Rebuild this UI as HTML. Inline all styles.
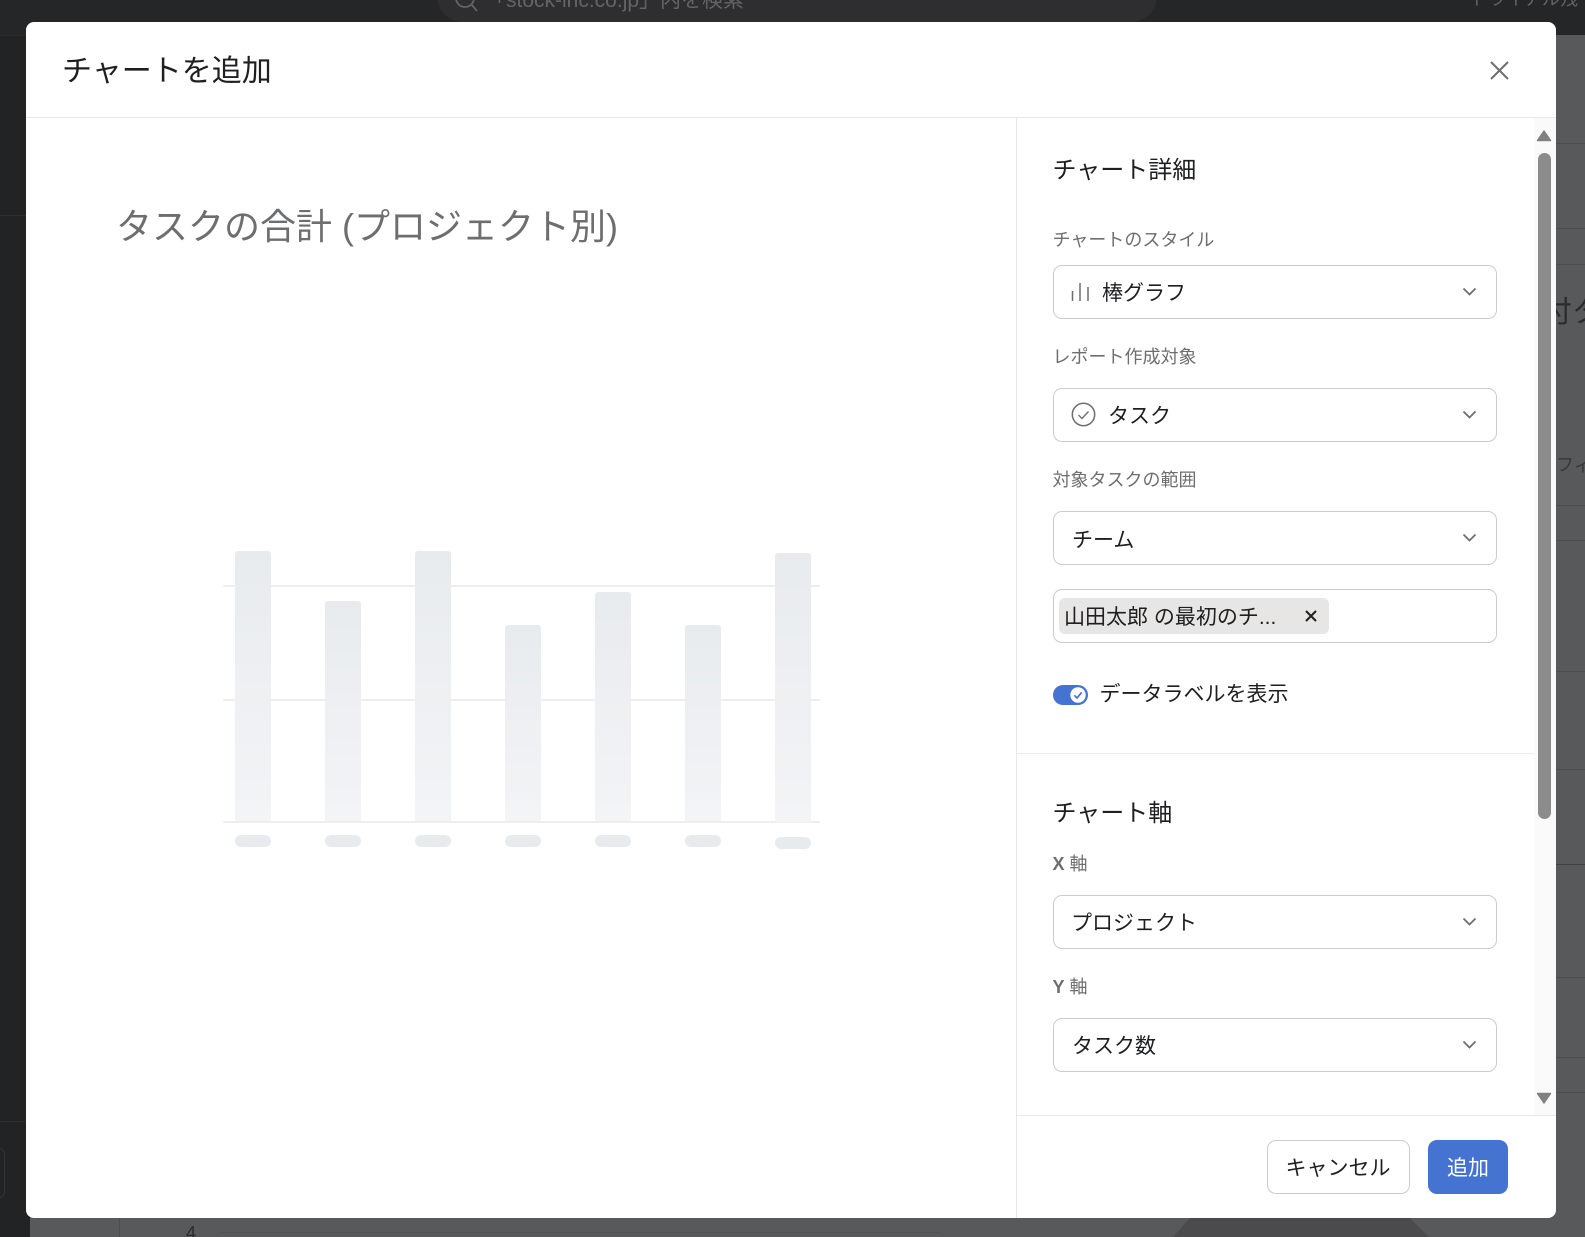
<!DOCTYPE html>
<html lang="ja"><head><meta charset="utf-8"><title>チャートを追加</title>
<style>
html,body{margin:0;padding:0;width:1585px;height:1237px;overflow:hidden;background:#58595b}
body{position:relative;font-family:"Liberation Sans","Noto Sans CJK JP",sans-serif;color:#1e1f21}
div,span{position:absolute;box-sizing:border-box;white-space:nowrap}
.t{line-height:32px;height:32px}
.lb{font-size:18px;color:#6d6e6f;left:1052.5px}
.h{font-size:24px;color:#1e1f21;left:1052.5px}
.v{font-size:21px;color:#1e1f21}
.sel{left:1053px;width:444px;height:54px;border:1.5px solid #cfcbcb;border-radius:9px;background:#fff}
.bar{width:36px;background:linear-gradient(#e8ebee,#f3f4f6);border-radius:3px 3px 0 0}
.pill{width:36px;height:12px;border-radius:6px;background:#e8ebee}
.g{left:223px;width:597px;height:2px;background:#edeef0}
.rl{left:1556px;width:29px;height:1px;background:#4d4e50}
svg{position:absolute;display:block}
</style></head><body>
<div style="left:0;top:0;width:1585px;height:35px;background:#252628"></div>
<div style="left:0;top:35px;width:30px;height:1202px;background:#222325"></div>
<div style="left:0;top:35px;width:26px;height:1px;background:#2c2d2f"></div>
<div style="left:0;top:215px;width:26px;height:1px;background:#2c2d2f"></div>
<div style="left:0;top:1121px;width:26px;height:1px;background:#2c2d2f"></div>
<div style="left:-20px;top:1148px;width:25px;height:50px;border:1px solid #333436;border-radius:6px"></div>
<div style="left:437px;top:-30px;width:720px;height:52px;border-radius:26px;background:#2e2e30"></div>
<svg style="left:452px;top:-10px" width="30" height="26" viewBox="0 0 30 26"><circle cx="13" cy="8" r="9" fill="none" stroke="#636466" stroke-width="1.8"/><path d="M19.5 14.5L25 21" stroke="#636466" stroke-width="1.8" fill="none"/></svg>
<div style="left:485px;top:-11px;font-size:21px;line-height:24px;color:#636466">「stock-inc.co.jp」内を検索</div>
<div style="left:1470px;top:-13px;font-size:18px;line-height:24px;color:#636466">トライアル残</div>
<div class="rl" style="top:143px"></div><div class="rl" style="top:228px"></div><div class="rl" style="top:264px"></div>
<div class="rl" style="top:505px"></div><div class="rl" style="top:540px"></div><div class="rl" style="top:671px"></div>
<div class="rl" style="top:769px"></div><div class="rl" style="top:864px;background:#404143"></div><div class="rl" style="top:977px"></div>
<div class="rl" style="top:1057px"></div><div class="rl" style="top:1092px"></div>
<div style="left:1556px;top:295px;width:29px;height:44px;overflow:hidden"><span style="left:-14px;top:0;font-size:30px;line-height:36px;color:#2b2c2e">付タ</span></div>
<div style="left:1556px;top:452px;font-size:18px;line-height:26px;color:#37383a;width:29px;overflow:hidden">フィ</div>
<div style="left:119px;top:1218px;width:1px;height:19px;background:#4d4e50"></div>
<div style="left:186px;top:1221px;font-size:18px;line-height:24px;color:#2b2c2e">4</div>
<div style="left:220px;top:1232px;width:720px;height:1px;background:#515254"></div>
<svg style="left:1170px;top:1218px" width="265" height="19"><path d="M20 0H240L259 19H3Z" fill="#4b4b4d"/></svg>

<div style="left:26px;top:22px;width:1530px;height:1196px;background:#fff;border-radius:8px;overflow:hidden">
 <div style="left:0;top:95px;width:1530px;height:1px;background:#e8e8e9"></div>
 <div style="left:990px;top:95px;width:1px;height:1101px;background:#e8e8e9"></div>
 <div style="left:1508px;top:96px;width:22px;height:997px;background:#fafafa"></div>
 <div style="left:1512px;top:131px;width:13px;height:666px;background:#8c8c8c;border-radius:7px"></div>
 <div style="left:991px;top:731px;width:517px;height:1px;background:#ececed"></div>
 <div style="left:991px;top:1093px;width:539px;height:1px;background:#e8e8e9"></div>
</div>
<svg style="left:1536px;top:129px" width="16" height="13"><path d="M8 2L14.5 11.5H1.5Z" fill="#808080" stroke="#808080" stroke-width="1.5" stroke-linejoin="round"/></svg>
<svg style="left:1536px;top:1092px" width="16" height="13"><path d="M1.5 1.5H14.5L8 11Z" fill="#808080" stroke="#808080" stroke-width="1.5" stroke-linejoin="round"/></svg>

<div class="t" style="left:62px;top:56px;height:32px;font-size:30px;line-height:32px;color:#1e1f21">チャートを追加</div>
<svg style="left:1489px;top:60px" width="21" height="21" viewBox="0 0 21 21"><path d="M2 2L19 19M19 2L2 19" stroke="#6d6e6f" stroke-width="2" fill="none"/></svg>

<div style="left:116px;top:204px;font-size:36px;line-height:46px;color:#6d6e6f">タスクの合計 (プロジェクト別)</div>

<div class="g" style="top:585px"></div>
<div class="g" style="top:699px"></div>
<div class="g" style="top:821px"></div>
<div class="bar" style="left:235px;top:551px;height:270px"></div>
<div class="bar" style="left:325px;top:600.5px;height:220.5px"></div>
<div class="bar" style="left:415px;top:551px;height:270px"></div>
<div class="bar" style="left:505px;top:624.5px;height:196.5px"></div>
<div class="bar" style="left:595px;top:591.5px;height:229.5px"></div>
<div class="bar" style="left:685px;top:624.5px;height:196.5px"></div>
<div class="bar" style="left:775px;top:552.5px;height:269.5px"></div>
<div class="pill" style="left:235px;top:834.5px"></div>
<div class="pill" style="left:325px;top:834.5px"></div>
<div class="pill" style="left:415px;top:834.5px"></div>
<div class="pill" style="left:505px;top:834.5px"></div>
<div class="pill" style="left:595px;top:834.5px"></div>
<div class="pill" style="left:685px;top:834.5px"></div>
<div class="pill" style="left:775px;top:836.5px"></div>

<div class="t h" style="top:155px">チャート詳細</div>
<div class="t lb" style="top:224px">チャートのスタイル</div>
<div class="sel" style="top:265px"></div>
<svg style="left:1070px;top:282px" width="21" height="20"><path d="M2.5 9V19M10 1V19M18 5V19" stroke="#6d6e6f" stroke-width="1.5" fill="none"/></svg>
<div class="t v" style="left:1102px;top:278px">棒グラフ</div>
<div class="t lb" style="top:341px">レポート作成対象</div>
<div class="sel" style="top:388px"></div>
<svg style="left:1071px;top:402px" width="25" height="25" viewBox="0 0 25 25"><circle cx="12.5" cy="12.5" r="11.2" fill="none" stroke="#6d6e6f" stroke-width="1.5"/><path d="M7.5 13L11 16.5L17.5 9.5" fill="none" stroke="#6d6e6f" stroke-width="1.4"/></svg>
<div class="t v" style="left:1108px;top:401px">タスク</div>
<div class="t lb" style="top:464px">対象タスクの範囲</div>
<div class="sel" style="top:511px"></div>
<div class="t v" style="left:1072px;top:525px">チーム</div>
<div class="sel" style="top:589px"></div>
<div style="left:1059px;top:598px;width:270px;height:36px;background:#e8e5e5;border-radius:6px"></div>
<div class="t v" style="left:1064px;top:602px;width:212px;overflow:hidden">山田太郎 の最初のチ...</div>
<svg style="left:1304px;top:609px" width="14" height="14"><path d="M2 2L12 12M12 2L2 12" stroke="#1e1f21" stroke-width="2" fill="none"/></svg>

<div style="left:1053px;top:685px;width:35px;height:20px;background:#4573d2;border-radius:10px"></div>
<svg style="left:1069px;top:686px" width="18" height="18" viewBox="0 0 18 18"><circle cx="9" cy="9" r="7.7" fill="#fff"/><path d="M5.3 9.3L8 12L12.7 6.3" fill="none" stroke="#4573d2" stroke-width="1.7"/></svg>
<div class="t v" style="left:1099.5px;top:679px">データラベルを表示</div>

<div class="t h" style="top:797.5px">チャート軸</div>
<div class="t lb" style="top:848px"><b>X</b> 軸</div>
<div class="sel" style="top:895px"></div>
<div class="t v" style="left:1071px;top:908px">プロジェクト</div>
<div class="t lb" style="top:971px"><b>Y</b> 軸</div>
<div class="sel" style="top:1018px"></div>
<div class="t v" style="left:1072px;top:1031px">タスク数</div>

<svg style="left:1461.5px;top:287px" width="15" height="10"><path d="M1.5 1.5L7.5 7.5L13.5 1.5" stroke="#6d6e6f" stroke-width="1.8" fill="none"/></svg>
<svg style="left:1461.5px;top:410px" width="15" height="10"><path d="M1.5 1.5L7.5 7.5L13.5 1.5" stroke="#6d6e6f" stroke-width="1.8" fill="none"/></svg>
<svg style="left:1461.5px;top:533px" width="15" height="10"><path d="M1.5 1.5L7.5 7.5L13.5 1.5" stroke="#6d6e6f" stroke-width="1.8" fill="none"/></svg>
<svg style="left:1461.5px;top:917px" width="15" height="10"><path d="M1.5 1.5L7.5 7.5L13.5 1.5" stroke="#6d6e6f" stroke-width="1.8" fill="none"/></svg>
<svg style="left:1461.5px;top:1040px" width="15" height="10"><path d="M1.5 1.5L7.5 7.5L13.5 1.5" stroke="#6d6e6f" stroke-width="1.8" fill="none"/></svg>

<div style="left:1267px;top:1140px;width:143px;height:54px;border:1.5px solid #cfcbcb;border-radius:9px;background:#fff"></div>
<div class="t v" style="left:1285.5px;top:1153px">キャンセル</div>
<div style="left:1428px;top:1140px;width:80px;height:54px;border-radius:9px;background:#4573d2"></div>
<div class="t v" style="left:1447px;top:1153px;color:#fff">追加</div>
</body></html>
